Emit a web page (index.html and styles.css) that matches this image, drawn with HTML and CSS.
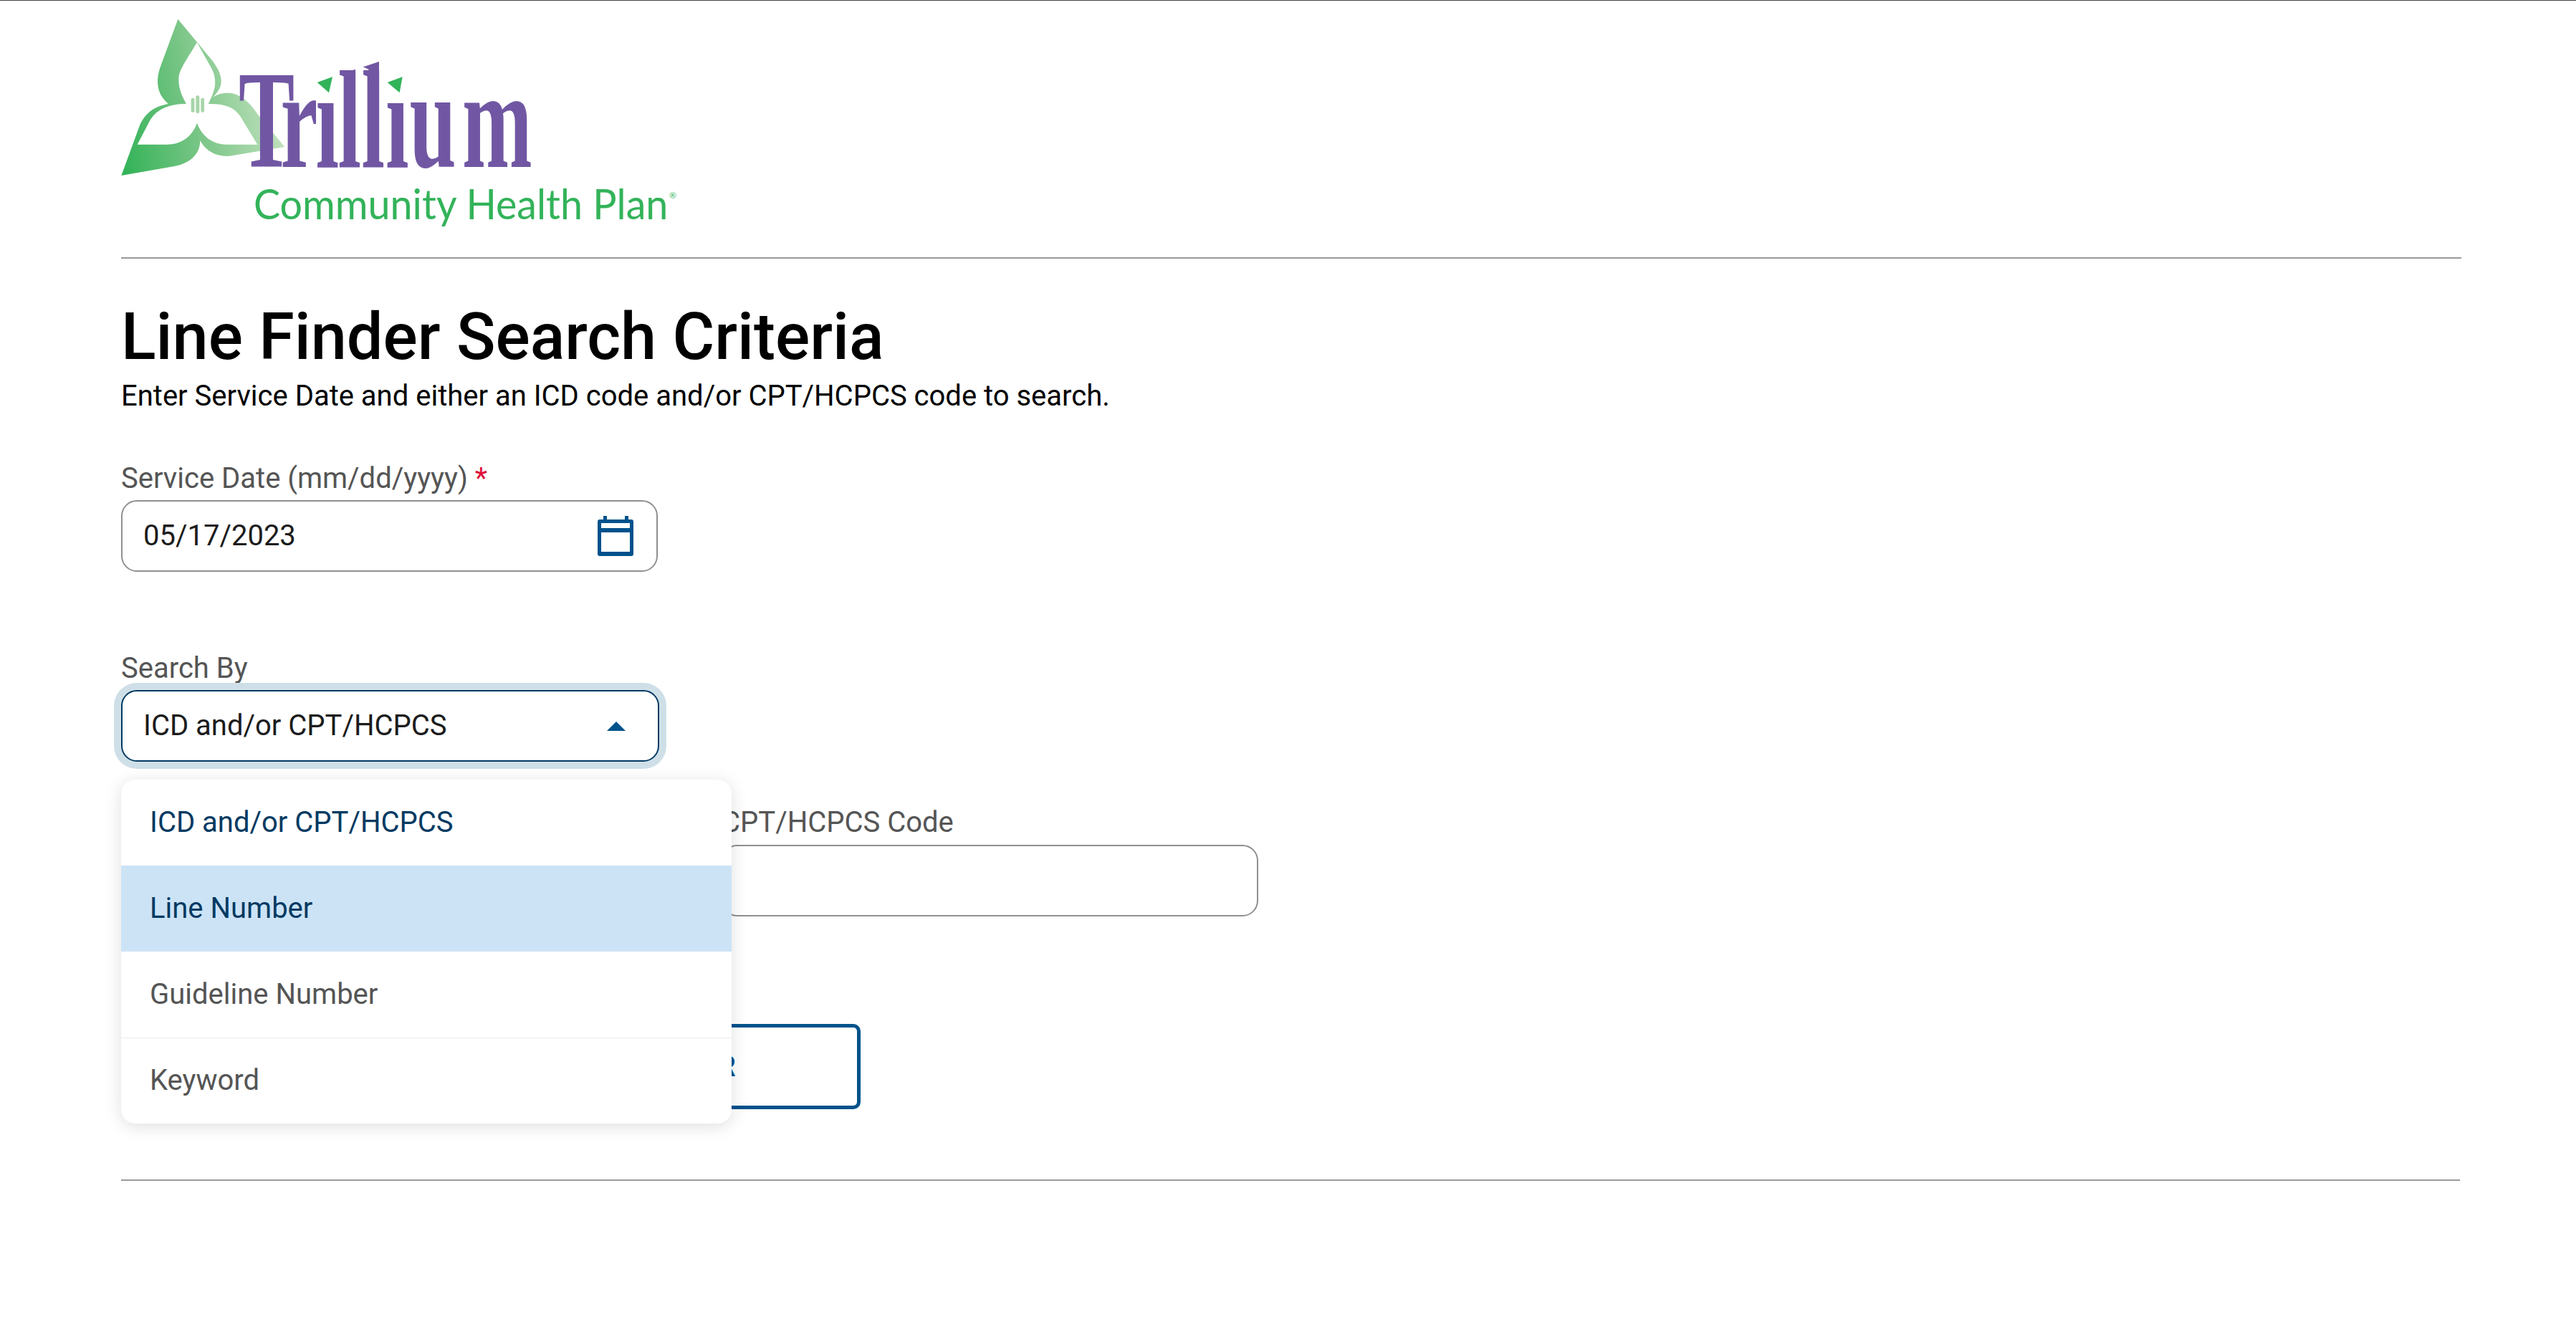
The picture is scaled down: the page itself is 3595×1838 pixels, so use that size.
FILE: index.html
```html
<!DOCTYPE html>
<html lang="en">
<head>
    <meta charset="UTF-8">
    <title>Line Finder Search Criteria</title>
    <link rel="stylesheet" href="styles.css">
</head>
<body>
    <div class="page">
        <header class="site-header">
            <svg class="logo" viewBox="27 0 2373 930" role="img" aria-label="Trillium Community Health Plan">
                <defs>
                    <linearGradient id="petalFill" gradientUnits="userSpaceOnUse" x1="40" y1="640" x2="712" y2="500">
                        <stop offset="0" stop-color="#34b358"/>
                        <stop offset="0.5" stop-color="#7cc688"/>
                        <stop offset="1" stop-color="#c2e2bf"/>
                    </linearGradient>
                </defs>
                <path fill="url(#petalFill)" d="M265 20 L410 195 C435 230 447 255 446 285 C445 310 425 335 408 350 C430 330 470 325 500 332 C540 345 575 380 600 420 L712 555 L490 592 C440 600 385 580 358 528 C358 590 310 625 250 636 L28 675 L105 465 C125 420 160 385 225 375 C195 350 180 320 180 280 C180 250 190 225 195 210 Z"/>
                <path fill="#fff" d="M345 118 L405 225 C420 250 424 285 418 310 C412 335 400 360 392 375 C470 375 510 390 540 450 L598 545 L470 545 C410 545 365 510 345 455 C325 510 280 545 220 545 L95 545 L150 440 C180 395 230 375 300 375 C280 340 268 310 268 270 C268 240 285 215 345 118 Z"/>
                <g fill="#a7d5a8">
                    <rect x="320" y="350" width="14" height="60" rx="6"/>
                    <rect x="340" y="340" width="15" height="74" rx="7"/>
                    <rect x="361" y="350" width="14" height="60" rx="6"/>
                </g>
                <text class="logo-name" transform="scale(0.6 1)" x="865 1157 1402 1557 1723 1890 2058 2425" y="640">Trillium</text>
                <rect class="logo-patch" x="848" y="225" width="90" height="125"/>
                <rect class="logo-patch" x="1142" y="225" width="92" height="125"/>
                <path class="logo-stem" d="M940 252 L1007 230 L1007 320 L965 320 L965 262 Z"/>
                <path class="logo-stem" d="M1040 220 L1107 198 L1107 320 L1063 320 L1063 230 Z"/>
                <path class="logo-leaf" d="M912 262 L848 285 L897 328 Z"/>
                <path class="logo-leaf" d="M1205 262 L1142 285 L1193 328 Z"/>
                <text class="logo-plan" x="582" y="858" textLength="1735" lengthAdjust="spacingAndGlyphs">Community Health Plan</text>
                <text class="logo-mark" x="2322" y="770">®</text>
            </svg>
        </header>

        <main>
            <h1 class="page-title">Line Finder Search Criteria</h1>
            <p class="page-intro">Enter Service Date and either an ICD code and/or CPT/HCPCS code to search.</p>

            <div class="field date-field">
                <label class="field-label">Service Date (mm/dd/yyyy) <span class="required">*</span></label>
                <div class="input-box">
                    <span class="input-value">05/17/2023</span>
                    <svg class="calendar-icon" viewBox="0 0 50 56">
                        <path d="M8 0h5v5h25V0h5v5h4a3 3 0 0 1 3 3v45a3 3 0 0 1-3 3H3a3 3 0 0 1-3-3V8a3 3 0 0 1 3-3h5z M5 10v7h40v-7z M5 23v27h40V23z" fill-rule="evenodd"/>
                    </svg>
                </div>
            </div>

            <div class="field search-field">
                <label class="field-label">Search By</label>
                <div class="select-wrap">
                    <div class="input-box select-box">
                        <span class="input-value">ICD and/or CPT/HCPCS</span>
                        <span class="caret"></span>
                    </div>
                    <ul class="dropdown">
                        <li class="option option-selected">ICD and/or CPT/HCPCS</li>
                        <li class="option option-active">Line Number</li>
                        <li class="option">Guideline Number</li>
                        <li class="option option-ruled">Keyword</li>
                    </ul>
                </div>
            </div>

            <div class="code-row">
                <div class="field">
                    <label class="field-label">ICD Code</label>
                    <div class="input-box"></div>
                </div>
                <div class="field">
                    <label class="field-label">CPT/HCPCS Code</label>
                    <div class="input-box"></div>
                </div>
            </div>

            <div class="button-row">
                <button class="btn btn-search">SEARCH</button>
                <button class="btn btn-clear">CLEAR</button>
            </div>
        </main>

        <div class="footer-rule"></div>
    </div>
</body>
</html>
```

FILE: styles.css
```css
:root {
    --navy: #023a62;
    --blue: #00528c;
    --grey-text: #555;
    --rule: #999;
}

html, body {
    margin: 0;
    background: #fff;
}

body {
    border-top: 1px solid #444;
    font-family: Roboto, "Liberation Sans", sans-serif;
    color: #000;
}

.page {
    padding: 0 160px 0 169px;
}

/* header + logo */
.site-header {
    padding: 19px 0 29px;
    border-bottom: 2px solid var(--rule);
}

.logo {
    display: block;
    width: 791px;
    height: 310px;
}

.logo-name {
    font-family: "Liberation Serif", serif;
    font-weight: 700;
    font-size: 586px;
    fill: #7157a3;
}

.logo-stem {
    fill: #7157a3;
}

.logo-plan {
    font-family: Lato, "Noto Sans", sans-serif;
    font-weight: 400;
    font-size: 172px;
    fill: #33b35a;
}

.logo-mark {
    font-family: Lato, sans-serif;
    font-size: 36px;
    fill: #33b35a;
}

.logo-patch {
    fill: #fff;
}

.logo-leaf {
    fill: #33b35a;
}

/* headings */
.page-title {
    margin: 60px 0 8px;
    font-size: 90px;
    line-height: 100px;
    font-weight: 500;
}

.page-intro {
    margin: 0;
    font-size: 40px;
    line-height: 48px;
}

/* form fields */
.field-label {
    display: block;
    height: 48px;
    margin-bottom: 7px;
    font-size: 40px;
    line-height: 50px;
    color: var(--grey-text);
}

.required {
    color: #e0103a;
}

.date-field {
    width: 749px;
    margin-top: 66px;
}

.search-field {
    width: 751px;
    margin-top: 110px;
}

.input-box {
    box-sizing: border-box;
    display: flex;
    align-items: center;
    justify-content: space-between;
    height: 100px;
    padding: 0 32px 0 29px;
    border: 2px solid #909090;
    border-radius: 22px;
    background: #fff;
}

.input-value {
    font-size: 40px;
    line-height: 46px;
    color: #1c1c1c;
}

.calendar-icon {
    width: 50px;
    height: 56px;
    fill: var(--blue);
}

.select-wrap {
    position: relative;
}

.select-box {
    padding: 0 45px 0 29px;
    border: 2px solid var(--navy);
    box-shadow: 0 0 0 10px #cfdfe8;
}

.caret {
    width: 0;
    height: 0;
    border-left: 13px solid transparent;
    border-right: 13px solid transparent;
    border-bottom: 13px solid var(--blue);
}

.dropdown {
    position: absolute;
    top: 125px;
    left: 0;
    z-index: 2;
    width: 852px;
    margin: 0;
    padding: 0;
    list-style: none;
    overflow: hidden;
    border-radius: 20px;
    background: #fff;
    box-shadow: 0 4px 24px rgba(0, 0, 0, 0.13);
}

.option {
    height: 120px;
    padding-left: 40px;
    font-size: 40px;
    line-height: 120px;
    color: var(--grey-text);
}

.option-selected {
    color: var(--navy);
}

.option-active {
    background: #cce3f6;
    color: var(--navy);
}

.option-ruled {
    box-shadow: inset 0 1px 0 #e6eaed;
}

.code-row {
    display: grid;
    grid-template-columns: 749px 749px;
    gap: 89px;
    margin-top: 60px;
}

.code-row .field-label {
    margin-bottom: 8px;
}

/* buttons */
.button-row {
    display: flex;
    gap: 40px;
    margin-top: 150px;
}

.btn {
    box-sizing: border-box;
    width: 481px;
    height: 119px;
    border: 5px solid var(--blue);
    border-radius: 10px;
    background: #fff;
    color: var(--blue);
    font-family: Roboto, sans-serif;
    font-size: 40px;
    font-weight: 700;
    letter-spacing: 2px;
}

.btn-clear {
    padding-left: 10px;
}

.btn-search {
    width: 511px;
    background: var(--blue);
    color: #fff;
}

.footer-rule {
    margin: 98px 2px 0 0;
    height: 2px;
    background: var(--rule);
}
```
